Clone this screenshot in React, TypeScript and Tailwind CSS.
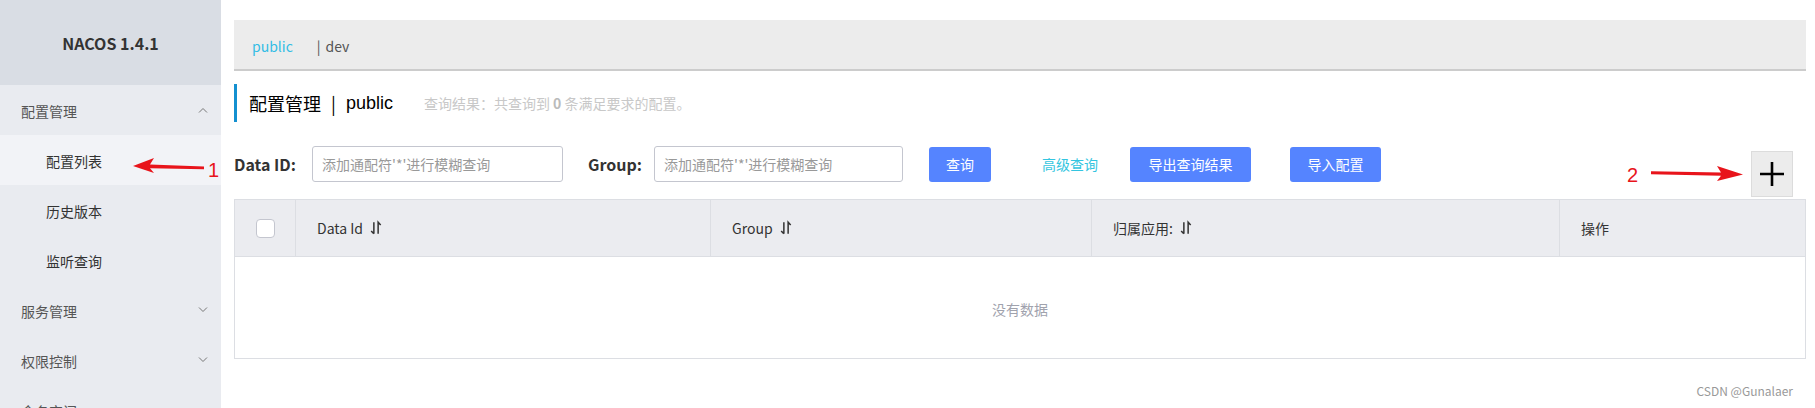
import { ReactNode } from 'react';

const SortIcon = () => (
  <svg width="12" height="16" viewBox="0 0 11 15" className="ml-[7px]" fill="none" stroke="#333" strokeWidth="1.4">
    <path d="M3.5 2v11M1 10.2l2.5 2.8" />
    <path d="M7.5 13V2l2.4 2.6" />
  </svg>
);

const Chevron = ({ up }: { up?: boolean }) => (
  <svg width="10" height="6" viewBox="0 0 10 6" fill="none" stroke="#777" strokeWidth="1">
    {up ? <path d="M1 5.5L5 1.5l4 4" /> : <path d="M1 0.5l4 4 4-4" />}
  </svg>
);

const MenuItem = ({ children, sub, active, chevron }: { children: ReactNode; sub?: boolean; active?: boolean; chevron?: 'up' | 'down' }) => (
  <div
    className={`h-[50px] flex items-center justify-between text-[14px] ${sub ? 'pl-[46px] text-[#333]' : 'pl-[21px] text-[#555]'} pr-[13px] ${active ? 'bg-[#f2f3f7]' : ''}`}
  >
    <span className="pt-[2px]">{children}</span>
    {chevron && <Chevron up={chevron === 'up'} />}
  </div>
);

const Sidebar = () => (
  <aside className="relative w-[221px] shrink-0 bg-[#e9ebf0] h-full">
    <div className="h-[85px] bg-[#d9dde4] flex items-center justify-center text-[16px] font-bold text-[#333]">
      NACOS 1.4.1
    </div>
    <MenuItem chevron="up">配置管理</MenuItem>
    <MenuItem sub active>配置列表</MenuItem>
    <MenuItem sub>历史版本</MenuItem>
    <MenuItem sub>监听查询</MenuItem>
    <MenuItem chevron="down">服务管理</MenuItem>
    <MenuItem chevron="down">权限控制</MenuItem>
    <MenuItem>命名空间</MenuItem>

    {/* annotation 1 */}
    <svg className="absolute left-[130px] top-[156px]" width="80" height="20" viewBox="0 0 80 20">
      <polygon points="3,10 24,2 20,8.4 74,10.4 74,13.2 20,12.2 24,17" fill="#e8141b" />
    </svg>
    <span className="absolute left-[208px] top-[158px] text-[20px] leading-[24px] text-[#e8141b] font-['Liberation_Sans',sans-serif]">1</span>
  </aside>
);

const Btn = ({ children, w }: { children: ReactNode; w: string }) => (
  <button className={`${w} h-[35px] rounded-[3px] bg-[#5584ff] text-white text-[14px]`}>{children}</button>
);

const Input = ({ w }: { w: string }) => (
  <input
    className={`${w} h-[36px] rounded-[3px] border border-[#c4c6cf] px-[9px] text-[14px] outline-none placeholder:text-[#999]`}
    placeholder="添加通配符'*'进行模糊查询"
  />
);

const HeadCell = ({ children, last }: { children: ReactNode; last?: boolean }) => (
  <div className={`flex items-center pl-[21px] text-[14px] text-[#333] ${last ? '' : 'border-r border-[#dcdee3]'}`}>
    {children}
  </div>
);

export default function App() {
  return (
    <div className="flex h-[408px] w-[1815px] overflow-hidden bg-white font-['Noto_Sans_CJK_SC','Noto_Sans',sans-serif]">
      <Sidebar />
      <main className="relative flex-1 pl-[13px] pr-[9px]">
        {/* namespace tabs */}
        <div className="mt-[20px] h-[51px] bg-[#ececec] border-b-2 border-[#cccccc] flex items-center pl-[18px] pt-[4px] text-[14px]">
          <span className="text-[#33bde5]">public</span>
          <span className="ml-[24px] text-[#555]">|</span>
          <span className="ml-[5px] text-[#555]">dev</span>
        </div>

        {/* title */}
        <div className="mt-[13px] h-[38px] border-l-[3px] border-[#1490d0] flex items-center pl-[12px]">
          <span className="text-[18px] text-black">配置管理</span>
          <span className="mx-[10px] text-[18px] text-black">|</span>
          <span className="text-[18px] text-black font-['Liberation_Sans',sans-serif]">public</span>
          <span className="ml-[31px] text-[14px] text-[#c8c8c8]">
            查询结果：共查询到 <b className="font-bold text-[#bbb]">0</b> 条满足要求的配置。
          </span>
        </div>

        {/* search row */}
        <div className="mt-[24px] flex items-start">
          <div className="flex items-center h-[36px]">
            <span className="text-[16px] font-bold text-[#333] w-[78px]">Data ID:</span>
            <Input w="w-[251px]" />
            <span className="ml-[25px] w-[66px] text-[16px] font-bold text-[#333]">Group:</span>
            <Input w="w-[249px]" />
            <div className="ml-[26px]"><Btn w="w-[62px]">查询</Btn></div>
            <span className="ml-[51px] text-[14px] text-[#33c5e0]">高级查询</span>
            <div className="ml-[32px]"><Btn w="w-[121px]">导出查询结果</Btn></div>
            <div className="ml-[39px]"><Btn w="w-[91px]">导入配置</Btn></div>
          </div>
          <button className="ml-auto mr-[13px] mt-[5px] w-[42px] h-[46px] bg-[#ececec] border border-[#dcdcdc] flex items-center justify-center">
            <svg width="26" height="26" viewBox="0 0 26 26" stroke="#000" strokeWidth="2.6">
              <path d="M13 1v24M1 13h24" />
            </svg>
          </button>
        </div>

        {/* table */}
        <div className="mt-[2px] border border-[#dcdee3]">
          <div className="grid grid-cols-[61px_415px_381px_468px_1fr] h-[57px] bg-[#ebecf0] border-b border-[#dcdee3]">
            <div className="flex items-center justify-center border-r border-[#dcdee3]">
              <span className="w-[19px] h-[19px] rounded-[4px] bg-white border border-[#c4c6cf]" />
            </div>
            <HeadCell>Data Id<SortIcon /></HeadCell>
            <HeadCell>Group<SortIcon /></HeadCell>
            <HeadCell>归属应用:<SortIcon /></HeadCell>
            <HeadCell last>操作</HeadCell>
          </div>
          <div className="h-[101px] flex items-center justify-center pt-[3px] text-[14px] text-[#a0a2ad]">没有数据</div>
        </div>

        <div className="mt-[23px] flex justify-end pr-[13px] text-[12px] text-[#999]">CSDN @Gunalaer</div>

        {/* annotation 2 */}
        <span className="absolute left-[1406px] top-[163px] text-[20px] leading-[24px] text-[#e8141b] font-['Liberation_Sans',sans-serif]">2</span>
        <svg className="absolute left-[1428px] top-[164px]" width="96" height="20" viewBox="0 0 96 20">
          <polygon points="2,7.2 72,8.4 68,2 94,10.4 68,17 72,11.8 2,10.2" fill="#e8141b" />
        </svg>
      </main>
    </div>
  );
}
